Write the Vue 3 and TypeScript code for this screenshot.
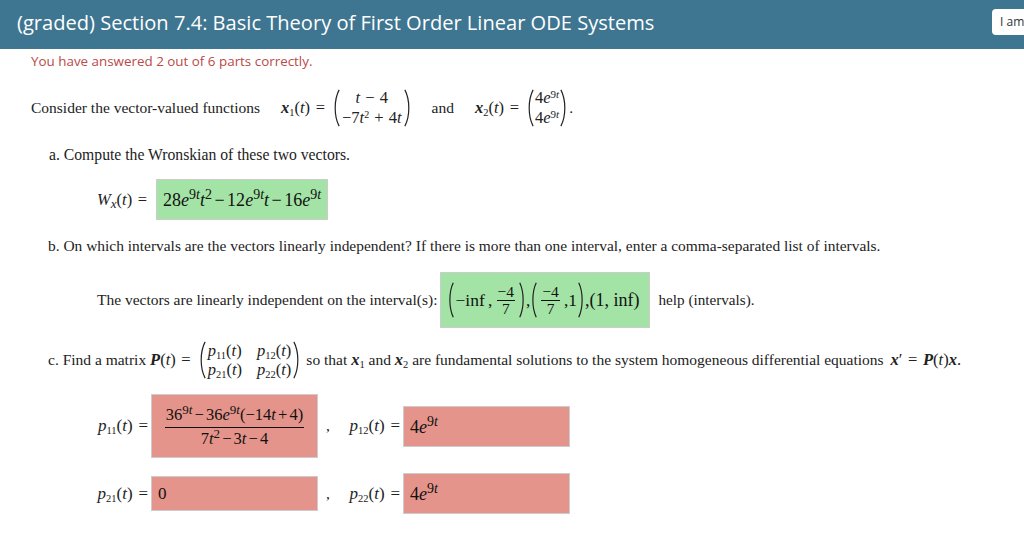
<script setup lang="ts">
const title = '(graded) Section 7.4: Basic Theory of First Order Linear ODE Systems'
</script>

<template>
  <div class="page">
    <header class="bar">
      <h1>{{ title }}</h1>
      <span class="iam">I am</span>
    </header>
    <main class="body">
      <p class="score">You have answered 2 out of 6 parts correctly.</p>

      <div class="row intro">
        <span class="w231">Consider the vector-valued functions</span>
        <span class="m x1"><b>x</b><sub>1</sub>(<i>t</i>) =</span>
        <span class="matrix">
          <svg class="paren" viewBox="0 0 8 42" preserveAspectRatio="none"><path d="M7 1C1 12 1 30 7 41" /></svg>
          <span class="col">
            <span><i>t</i> − 4</span>
            <span>−7<i>t</i><sup>2</sup> + 4<i>t</i></span>
          </span>
          <svg class="paren" viewBox="0 0 8 42" preserveAspectRatio="none"><path d="M1 1C7 12 7 30 1 41" /></svg>
        </span>
        <span class="and">and</span>
        <span class="m x2"><b>x</b><sub>2</sub>(<i>t</i>) =</span>
        <span class="matrix">
          <svg class="paren" viewBox="0 0 8 42" preserveAspectRatio="none"><path d="M7 1C1 12 1 30 7 41" /></svg>
          <span class="col wide">
            <span>4<i>e</i><sup>9<i>t</i></sup></span>
            <span>4<i>e</i><sup>9<i>t</i></sup></span>
          </span>
          <svg class="paren" viewBox="0 0 8 42" preserveAspectRatio="none"><path d="M1 1C7 12 7 30 1 41" /></svg>
        </span>
        <span class="dot">.</span>
      </div>

      <p class="part a">a. Compute the Wronskian of these two vectors.</p>

      <div class="row wr">
        <span class="m"><i>W</i><sub class="big"><i>x</i></sub>(<i>t</i>) =</span>
        <span class="box ok wbox">28<i>e</i><sup>9<i>t</i></sup><i>t</i><sup>2</sup> − 12<i>e</i><sup>9<i>t</i></sup><i>t</i> − 16<i>e</i><sup>9<i>t</i></sup></span>
      </div>

      <p class="part b">b. On which intervals are the vectors linearly independent? If there is more than one interval, enter a comma-separated list of intervals.</p>

      <div class="row iv">
        <span>The vectors are linearly independent on the interval(s):</span>
        <span class="box ok ivbox">
          <svg class="paren tall" viewBox="0 0 8 42" preserveAspectRatio="none"><path d="M7 1C1 12 1 30 7 41" /></svg>
          <span>−inf ,</span>
          <span class="frac small"><span class="num">−4</span><span>7</span></span>
          <svg class="paren tall" viewBox="0 0 8 42" preserveAspectRatio="none"><path d="M1 1C7 12 7 30 1 41" /></svg>
          <span>,</span>
          <svg class="paren tall" viewBox="0 0 8 42" preserveAspectRatio="none"><path d="M7 1C1 12 1 30 7 41" /></svg>
          <span class="frac small"><span class="num">−4</span><span>7</span></span>
          <span>,1</span>
          <svg class="paren tall" viewBox="0 0 8 42" preserveAspectRatio="none"><path d="M1 1C7 12 7 30 1 41" /></svg>
          <span class="last">,(1, inf)</span>
        </span>
        <span class="help">help (intervals).</span>
      </div>

      <div class="row c">
        <span>c. Find a matrix <span class="m"><b>P</b>(<i>t</i>) =</span></span>
        <span class="matrix pm">
          <svg class="paren" viewBox="0 0 8 42" preserveAspectRatio="none"><path d="M7 1C1 12 1 30 7 41" /></svg>
          <span class="grid2">
            <span><i>p</i><sub>11</sub>(<i>t</i>)</span><span><i>p</i><sub>12</sub>(<i>t</i>)</span>
            <span><i>p</i><sub>21</sub>(<i>t</i>)</span><span><i>p</i><sub>22</sub>(<i>t</i>)</span>
          </span>
          <svg class="paren" viewBox="0 0 8 42" preserveAspectRatio="none"><path d="M1 1C7 12 7 30 1 41" /></svg>
        </span>
        <span>so that <b class="m">x</b><sub>1</sub> and <b class="m">x</b><sub>2</sub> are fundamental solutions to the system homogeneous differential equations <span class="m tail"><b>x</b>′ = <b>P</b>(<i>t</i>)<b>x</b>.</span></span>
      </div>

      <div class="answers">
        <span class="lab m"><i>p</i><sub>11</sub>(<i>t</i>) =</span>
        <span class="box bad b1">
          <span class="frac big">
            <span class="num">36<sup>9<i>t</i></sup> − 36<i>e</i><sup>9<i>t</i></sup>(−14<i>t</i> + 4)</span>
            <span>7<i>t</i><sup>2</sup> − 3<i>t</i> − 4</span>
          </span>
        </span>
        <span class="comma">,</span>
        <span class="lab m"><i>p</i><sub>12</sub>(<i>t</i>) =</span>
        <span class="box bad b2">4<i>e</i><sup>9<i>t</i></sup></span>

        <span class="lab m"><i>p</i><sub>21</sub>(<i>t</i>) =</span>
        <span class="box bad b1 b3">0</span>
        <span class="comma">,</span>
        <span class="lab m"><i>p</i><sub>22</sub>(<i>t</i>) =</span>
        <span class="box bad b2">4<i>e</i><sup>9<i>t</i></sup></span>
      </div>
    </main>
  </div>
</template>

<style>
html, body { margin: 0; background: #fff; }
</style>

<style scoped>
.page {
  width: 1024px;
  height: 542px;
  overflow: hidden;
  font-family: "Liberation Serif", serif;
  font-size: 15.5px;
  color: #222;
}
.bar {
  height: 49px;
  background: #3e7590;
  display: flex;
  align-items: center;
  justify-content: space-between;
  padding: 0 0 5px 17px;
  box-sizing: border-box;
}
h1 {
  margin: 0;
  font: 400 20.09px "Open Sans", sans-serif;
  color: #fff;
}
.iam {
  width: 32px;
  height: 26px;
  box-sizing: border-box;
  background: #fff;
  border-radius: 4px 0 0 4px;
  font: 12px/26px "Open Sans", sans-serif;
  padding-left: 8px;
  color: #333;
  overflow: hidden;
  white-space: nowrap;
}
.body { padding-left: 31px; }
.score {
  margin: 4px 0 0;
  font: 13.4px/17px "Open Sans", sans-serif;
  color: #b94a48;
}
p { margin: 0; }
.row { display: flex; align-items: center; }
.m { font-size: 16.5px; word-spacing: 1.5px; }
b { font-weight: 700; font-style: italic; }
sub { font-size: 10.5px; line-height: 0; vertical-align: -3px; }
sub.big { font-size: 13px; }
sup { font-size: 10px; line-height: 0; vertical-align: 5px; }

.intro { margin-top: 15px; height: 46px; }
.w231 { width: 231px; white-space: nowrap; }
.x1 { margin-left: 19px; }
.x2 { margin-left: 21px; }
.and { margin-left: 21px; }
.dot { margin-left: 2px; }
.matrix { display: inline-flex; align-items: center; margin-left: 8px; font-size: 16.5px; }
.paren { width: 7px; height: 38px; flex: none; }
.paren path { fill: none; stroke: #222; stroke-width: 1.2; vector-effect: non-scaling-stroke; }
.paren.tall { height: 36px; width: 6px; }
.col { display: flex; flex-direction: column; align-items: center; line-height: 20px; padding: 0 2px; word-spacing: 1px; }
.col.wide { padding: 0 1px; }
.col.wide sup { font-size: 11px; }

.part.a { margin: 14px 0 0 18px; line-height: 20px; font-size: 15.7px; }
.wr { margin: 14px 0 0 66px; gap: 9px; }
.box { display: inline-flex; align-items: center; box-sizing: border-box; border: 1px solid #ccc; color: #111; }
.ok { background: #a3e3a5; }
.bad { background: #e5948b; }
.wbox { display: block; width: 172px; height: 41px; line-height: 40px; padding-left: 6px; font-size: 18px; white-space: nowrap; word-spacing: -2px; }
.wbox sup { font-size: 14px; vertical-align: 7px; }

.part.b { margin: 16px 0 0 17px; line-height: 20px; white-space: nowrap; font-size: 15.45px; }
.iv { margin: 16px 0 0 66px; gap: 3px; }
.ivbox { width: 210px; height: 56px; padding-left: 7px; gap: 1px; font-size: 17.5px; white-space: nowrap; word-spacing: -1px; }
.last { font-size: 18px; word-spacing: 0; }
.frac { display: inline-flex; flex-direction: column; align-items: center; text-align: center; }
.frac .num { border-bottom: 1px solid #111; padding: 0 1px; }
.frac.small { font-size: 15.5px; line-height: 16px; margin: 0 3px; }
.help { margin-left: 5px; font-size: 15.2px; }

.c { margin: 11px 0 0 17px; white-space: nowrap; height: 42px; }
.pm { margin: 0 6px 0 8px; }
.grid2 { display: grid; grid-template-columns: auto auto; column-gap: 15px; line-height: 19px; font-size: 16.5px; padding: 0 2px; }
.tail { margin-left: 3px; }

.answers {
  display: grid;
  grid-template-columns: 120px 167px 20px 65px 167px;
  margin-top: 13px;
  row-gap: 15px;
  align-items: center;
}
.lab { justify-self: end; padding-right: 3px; white-space: nowrap; font-size: 17px; }
.comma { text-align: center; }
.b1 { width: 167px; height: 64px; justify-content: center; }
.b2 { display: block; height: 41px; padding-left: 6px; font-size: 18px; line-height: 40px; }
.b2 sup { font-size: 14px; vertical-align: 7px; }
.b3 { height: 35px; justify-content: flex-start; padding-left: 6px; font-size: 17px; }
.frac.big { font-size: 16.5px; line-height: 21px; white-space: nowrap; word-spacing: -2px; }
.frac.big sup { font-size: 13px; vertical-align: 6px; }
.frac.big .num { padding: 0 1px 2px; }
</style>
